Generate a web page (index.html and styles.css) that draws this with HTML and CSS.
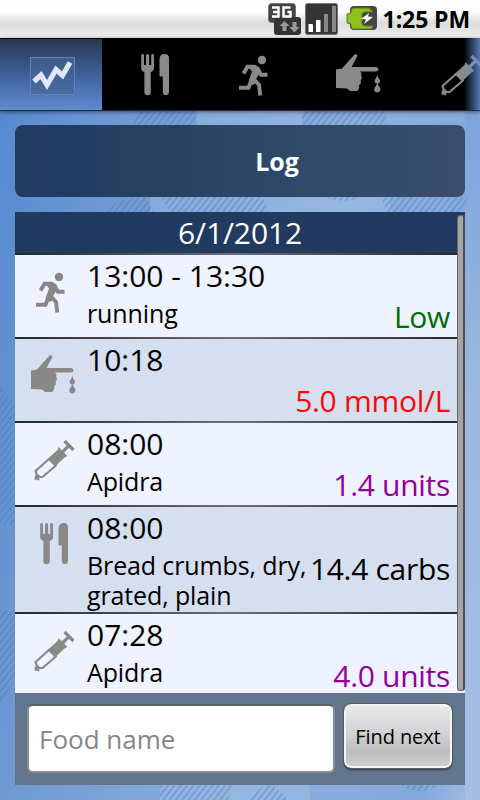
FILE: index.html
```
<!DOCTYPE html>
<html lang="en">
<head>
  <meta charset="UTF-8" />
  <meta name="viewport" content="width=device-width, initial-scale=1.0"/>
  <title>Log</title>
  <link rel="stylesheet" href="styles.css">
</head>
<body>
  <!-- ICON SHAPES -->
  <svg class="defs" width="0" height="0">
    <symbol id="food" viewBox="0 0 48 48">
      <path d="M12.200 3.500a1.400 1.400 0 0 1 2.800 0V13h2V3.500a1.600 1.600 0 0 1 3.200 0V13h2V3.500a1.400 1.400 0 0 1 2.800 0V16q0 3-3.200 4V40a3.200 3.200 0 0 1-6.400 0V20q-3.200-1-3.200-4z"/>
      <path d="M30.500 24.500V7.500q0-5.500 5.500-5.500 4 0 4 4.500V40a3 3 0 0 1-6.200 0V24.500z"/>
    </symbol>
    <symbol id="run" viewBox="0 0 48 48">
      <circle cx="31" cy="8" r="4.200"/>
      <path d="M12.500 21.500 16.500 14.800 24 14.800M27 17.500 30 22.800 36.500 22.800M21 27 17.500 35.800 8 35.800M22.500 27 28 32.800 29.300 43.500" fill="none" stroke="currentColor" stroke-width="3.900"/>
      <path d="M16 12.900h8.500l4.500 3 .5 4-4.500 7.100 1 3-4 3-4.500-3.500 3.500-10z"/>
    </symbol>
    <symbol id="glucose" viewBox="0 0 48 48">
      <path d="M3 17.500l6-1L21.500 2.500q3-1 3 1.500L18.500 15H43q2.500.300 2.500 2.200t-2.500 2.200L26.500 19.500q3 1.500 1.500 4 2 2.500-.500 5 1.500 3-1.500 4.500 1 4-2 6h-7l-3-2.500L3 36z"/>
      <path d="M44.300 23q1 3.300 2.500 4.800 1 3.400-2.500 3.900-3.500-.500-2.500-3.900 1.500-1.500 2.500-4.800zM44.300 31q1 2.800 2.800 4.500 1.200 4.500-2.800 5-4-.500-2.800-4.500 1.800-2.200 2.800-5z"/>
    </symbol>
    <symbol id="syringe" viewBox="0 0 48 48">
      <path d="M36.500 4 45.500 13M41 8.500 34 15.500" fill="none" stroke="currentColor" stroke-width="3.200"/>
      <path d="M30.500 10 39.500 19 36.500 20.500 27 29.500 19.500 22 29.500 13z"/>
      <path d="M21.500 21.500 7.500 34 9.500 40H14.500L28.500 28M11 38 7 42.500M7 39 11 43" fill="none" stroke="currentColor" stroke-width="2.200"/>
    </symbol>
  </svg>

  <!-- WALLPAPER -->
  <svg class="wallpaper" width="480" height="800" viewBox="0 0 480 800">
    <defs>
      <pattern id="hatch" width="5" height="5" patternUnits="userSpaceOnUse" patternTransform="rotate(38)">
        <rect width="2" height="5" fill="#3f78bd" opacity=".32"/>
      </pattern>
      <linearGradient id="edge" x2="0" y2="1">
        <stop offset="0" stop-color="#7ea4dc"/>
        <stop offset=".4" stop-color="#9ab8de"/>
        <stop offset="1" stop-color="#a5bfe2"/>
      </linearGradient>
    </defs>
    <rect x="465" y="111" width="15" height="689" fill="url(#edge)"/>
    <g fill="#a9c4e6" opacity=".35">
      <path d="M197 111H302v14H197zM150 197h240v15H150zM160 785h150v15H160z"/>
    </g>
    <g fill="url(#hatch)">
      <path d="M137 111h60l-4 14h-60zM302 111h84v14h-84zM108 208q15-12 38-11l8 15h-48zM160 197h103l5 15h-97zM326 197h34q-15 8-34 0zM380 197h88l-6 15h-74z"/>
      <path d="M0 385l15 20v120H0zM0 610h15v70l-15 24zM160 785h72l-4 15h-68zM248 800q8-15 25-15l16 15zM400 785h37q-15 12-37 0z"/>
    </g>
  </svg>

  <div class="status-bar">
    <svg class="status-icons" width="112" height="38" viewBox="0 0 112 38">
      <rect x="5.500" y="3.500" width="27" height="19" rx="3" fill="#444" stroke="#777"/>
      <rect x="11" y="17" width="27" height="18" rx="3" fill="#333"/>
      <path d="M9 7.500h6.500v9H9M10 12h5.500M27.500 7.500h-7v9h7v-4.500h-3" fill="none" stroke="#fff" stroke-width="2.500"/>
      <path d="M19.500 31v-5h-3l5-5 5 5h-3v5zM29.500 22v5h-3l5 5.500 5-5.500h-3v-5z" fill="#999"/>
      <rect x="42.500" y="3.500" width="32" height="31" rx="2" fill="#353535" stroke="#777"/>
      <path d="M45.500 24H49q1 0 1 1v7h-4.500zM53 20h4.500v12H53z" fill="#fff"/>
      <path d="M61 14h4v18h-4zM69 6h4v26h-4z" fill="#888"/>
      <rect x="87" y="6" width="27" height="24" rx="4" fill="#444"/>
      <path d="M107 8H91q-3 0-3 3v2l-4 1v9l4 1v3q0 2 3 2h16q3 0 3-3h-8q-3 0-3-3v-8q0-3 3-3h8q0-2-3-2z" fill="#8bc21d" stroke="#5d7630"/>
      <path d="M106 13l-8 6 5 .500-2 4.500 9-7-5-.500z" fill="#fff"/>
    </svg>
    <span class="clock">1:25 PM</span>
  </div>

  <nav class="tabs">
    <div class="tab selected">
      <svg class="chart-icon" width="49" height="42" viewBox="0 0 49 42">
        <rect x="2.500" y="2.500" width="44" height="37" fill="#456493" fill-opacity=".65" stroke="#5f83b5"/>
        <path d="M6 26.500 13 20 19 30 28 14.500 34.500 20.500 42 7.500" fill="none" stroke="#dfe8f8" stroke-width="5.200"/>
      </svg>
    </div>
    <div class="tab"><svg class="icon"><use href="#food"/></svg></div>
    <div class="tab"><svg class="icon"><use href="#run"/></svg></div>
    <div class="tab"><svg class="icon"><use href="#glucose"/></svg></div>
    <div class="tab"><svg class="icon"><use href="#syringe"/></svg></div>
  </nav>

  <main>
    <h1>Log</h1>

    <div class="log">
      <div class="date">6/1/2012</div>
      <div class="entry">
        <svg class="icon"><use href="#run"/></svg>
        <div class="info"><div class="time">13:00 - 13:30</div><div class="note">running</div></div>
        <div class="value low">Low</div>
      </div>
      <div class="entry alt">
        <svg class="icon"><use href="#glucose"/></svg>
        <div class="info"><div class="time">10:18</div></div>
        <div class="value high">5.0 mmol/L</div>
      </div>
      <div class="entry">
        <svg class="icon insulin"><use href="#syringe"/></svg>
        <div class="info"><div class="time">08:00</div><div class="note">Apidra</div></div>
        <div class="value units">1.4 units</div>
      </div>
      <div class="entry alt tall">
        <svg class="icon"><use href="#food"/></svg>
        <div class="info"><div class="time">08:00</div><div class="note">Bread crumbs, dry, grated, plain</div></div>
        <div class="value">14.4 carbs</div>
      </div>
      <div class="entry last">
        <svg class="icon insulin"><use href="#syringe"/></svg>
        <div class="info"><div class="time">07:28</div><div class="note">Apidra</div></div>
        <div class="value units">4.0 units</div>
      </div>
      <div class="scrollbar"></div>
    </div>

    <form class="search">
      <input type="text" placeholder="Food name">
      <button type="button">Find next</button>
    </form>
  </main>
</body>
</html>
```
FILE: styles.css
```
* {
  box-sizing: border-box;
}

html, body {
  margin: 0;
  height: 100%;
  overflow: hidden;
}

body {
  position: relative;
  width: 480px;
  height: 800px;
  font-family: 'Open Sans', 'Noto Sans', sans-serif;
  color: #000;
  background: linear-gradient(100deg, #5187d0 0%, #6c97d2 20%, #8eafdd 60%, #84a8dc 90%, #a2bee2 100%);
}

.defs, .wallpaper {
  position: absolute;
  top: 0;
  left: 0;
}

.wallpaper {
  z-index: -1;
}

.status-bar {
  display: flex;
  align-items: center;
  justify-content: flex-end;
  height: 38px;
  padding-right: 10px;
  background: linear-gradient(#fff 0%, #fdfdfd 30%, #dcdcdc 60%, #eee 100%);
}

.status-icons {
  margin-right: 8px;
  overflow: visible;
}

.clock {
  font-size: 23px;
  font-weight: 700;
  letter-spacing: -0.1px;
  white-space: nowrap;
}

/* TABS */
.tabs {
  display: flex;
  height: 73px;
  overflow: hidden;
  position: relative;
  background: #000;
  border-bottom: 1px solid #222b38;
  box-shadow: 0 1px 4px rgba(0, 0, 0, 0.5);
}

.tab {
  flex: 0 0 102px;
  display: flex;
  align-items: center;
  justify-content: center;
  padding-top: 4px;
  color: #898989;
}

.tab.selected {
  margin-top: 1px;
  padding: 3px 0 0 2px;
  background: linear-gradient(#26374f, #3e6199 50%, #608bd0);
}

/* fade where the tabs scroll off */
.tabs::after {
  content: "";
  position: absolute;
  top: 0;
  right: 0;
  width: 16px;
  height: 72px;
  background: linear-gradient(90deg, rgba(77, 124, 190, 0), rgba(98, 145, 214, 0.85));
}

.icon {
  flex: none;
  width: 48px;
  height: 48px;
  fill: currentColor;
}

main {
  padding: 14px 15px 0;
}

h1 {
  margin: 0 0 15px;
  height: 72px;
  padding-left: 74px;
  border-radius: 8px;
  background: linear-gradient(90deg, #223c60, #213d65 15%, #26405f 25%, #2d4969 60%, #3a4d6c);
  color: #fff;
  font-size: 25px;
  line-height: 72px;
  text-align: center;
}

/* LOG LIST */
.log {
  position: relative;
  height: 481px;
  overflow: hidden;
  background: #eff2ff;
}

.date {
  height: 41px;
  background: #213a5f;
  color: #fff;
  font-size: 30px;
  letter-spacing: -0.1px;
  line-height: 41px;
  text-align: center;
}

.entry {
  display: flex;
  height: 84px;
  padding-left: 13px;
  border-top: 2px solid;
  border-image: linear-gradient(90deg, #20262f, #6b6e78 48%, #24262e) 1;
  background: #eff2ff;
}

.entry.alt {
  background: #d6dfef;
}

.entry.tall {
  height: 107px;
}

.entry.last {
  height: 81px;
}

.entry .icon {
  margin-top: 14px;
  color: #8a8789;
}

.entry .insulin {
  color: #888a86;
}

.info {
  flex: 1;
  min-width: 0;
  margin-left: 11px;
}

.time {
  height: 44px;
  font-size: 30px;
  line-height: 41px;
}

.note {
  font-size: 25px;
  letter-spacing: -0.12px;
  line-height: 30px;
  margin-top: -1px;
}

.value {
  align-self: flex-end;
  margin-right: 15px;
  font-size: 30px;
  letter-spacing: -0.3px;
  line-height: 40px;
  white-space: nowrap;
}

.tall .value {
  margin-bottom: 23px;
}

.last .value {
  margin-bottom: -3px;
}

.low { color: #006e00; }
.high { color: #f80808; }
.units { color: #92009a; }

.scrollbar {
  position: absolute;
  top: 3px;
  right: 0;
  width: 8px;
  height: 476px;
  border: 1px solid #666;
  border-right: 2px solid #4d4d4f;
  border-radius: 3px;
  background: #a5a5a5;
}

/* SEARCH */
.search {
  display: flex;
  align-items: flex-start;
  height: 92px;
  padding: 11px 12px 0;
  background: #61758d;
}

.search input {
  width: 308px;
  height: 69px;
  padding: 0 10px;
  border: 2px solid #8a8f96;
  border-top-color: #5d636b;
  border-radius: 6px;
  background: #fff;
  font: 26px 'Open Sans', sans-serif;
}

.search input::placeholder {
  color: #868686;
}

.search button {
  width: 108px;
  height: 64px;
  margin-left: 9px;
  padding: 0;
  border: 2px solid #f4f4f4;
  border-radius: 7px;
  outline: 1px solid #555b63;
  background: linear-gradient(#e9e8ea, #d0cfd1 50%, #bdbcbe 75%, #cfcfcf);
  box-shadow: 0 2px 2px rgba(0, 0, 0, 0.5);
  color: #000;
  font: 20px 'Open Sans', sans-serif;
  letter-spacing: -0.1px;
}
```
